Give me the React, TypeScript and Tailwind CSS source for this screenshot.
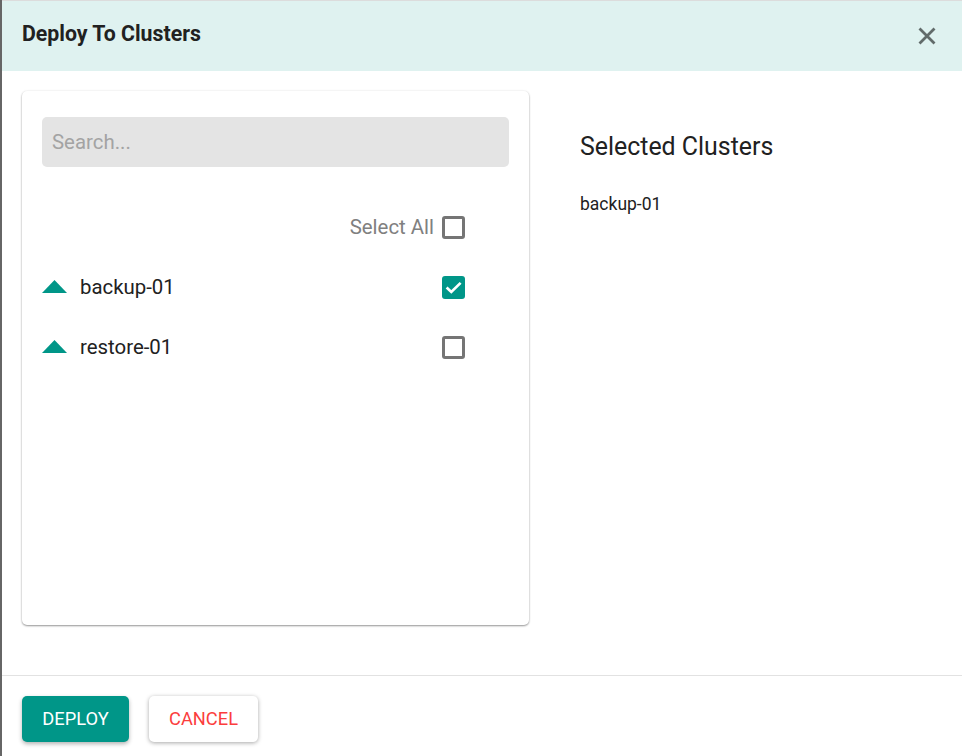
import React from "react";

function Box({ checked }: { checked?: boolean }) {
  return checked ? (
    <span className="flex h-[23px] w-[23px] items-center justify-center rounded-[3px] bg-[#009688]">
      <svg width="23" height="23" viewBox="0 0 23 23" fill="none">
        <path d="M4.6 11.6L9.3 15.9L18.6 6.9" stroke="#fff" strokeWidth="2.7" />
      </svg>
    </span>
  ) : (
    <span className="block h-[23px] w-[23px] rounded-[3px] border-[3px] border-[#757575] bg-white" />
  );
}

function Row({ name, checked }: { name: string; checked?: boolean }) {
  return (
    <div className="flex h-[60px] items-center">
      <svg width="25" height="13" viewBox="0 0 25 13" className="mb-[1px] mr-[13px] shrink-0">
        <path d="M0 13L12.5 0L25 13Z" fill="#009688" />
      </svg>
      <span className="text-[20.4px] text-[#212121]">{name}</span>
      <span className="ml-auto mr-[44px]">
        <Box checked={checked} />
      </span>
    </div>
  );
}

export default function App() {
  return (
    <div className="flex h-[756px] w-[962px] overflow-hidden bg-white font-['Roboto',sans-serif]">
      <div className="w-[2px] shrink-0 bg-[#666666]" />
      <div className="flex min-w-0 flex-1 flex-col">
        <div className="h-px bg-[#dcdcdc]" />
        <header className="flex h-[70px] items-center justify-between bg-[#dff2f0] pl-5 pr-[24px]">
          <h1 className="mb-[4px] text-[21.3px] font-bold text-[#212121]">Deploy To Clusters</h1>
          <svg width="22" height="22" viewBox="0 0 22 22" fill="none">
            <path d="M3.5 3.5l15 15M18.5 3.5l-15 15" stroke="#616b6a" strokeWidth="2.8" />
          </svg>
        </header>
        <main className="flex h-[605px] border-b border-[#e2e2e2] pl-5 pt-5">
          <section className="h-[534px] w-[507px] rounded-[5px] bg-white px-5 pt-[26px] shadow-[0_1px_2px_rgba(0,0,0,0.4),0_0_3px_rgba(0,0,0,0.06)]">
            <div className="flex h-[50px] items-center rounded-[5px] bg-[#e4e4e4] px-[10px] text-[20.4px] text-[#a3a3a3]">
              Search...
            </div>
            <div className="mt-[30px] flex h-[60px] items-center justify-end">
              <span className="mr-[8px] text-[20.4px] text-[#808080]">Select All</span>
              <span className="mr-[44px]">
                <Box />
              </span>
            </div>
            <Row name="backup-01" checked />
            <Row name="restore-01" />
          </section>
          <aside className="ml-[51px] pt-[38px] text-[#212121]">
            <h2 className="text-[24.9px] leading-[36px]">Selected Clusters</h2>
            <p className="mt-[27px] text-[17.5px] leading-[24px]">backup-01</p>
          </aside>
        </main>
        <footer className="flex flex-1 items-start gap-5 pl-5 pt-5">
          <button className="flex h-[46px] w-[107px] items-center justify-center rounded-[5px] bg-[#009688] text-[18.3px] text-white shadow-[0_2px_4px_rgba(0,0,0,0.3)]">
            DEPLOY
          </button>
          <button className="flex h-[46px] w-[109px] items-center justify-center rounded-[5px] bg-white text-[18.3px] text-[#fb3d3d] shadow-[0_1px_4px_rgba(0,0,0,0.35)]">
            CANCEL
          </button>
        </footer>
      </div>
    </div>
  );
}
